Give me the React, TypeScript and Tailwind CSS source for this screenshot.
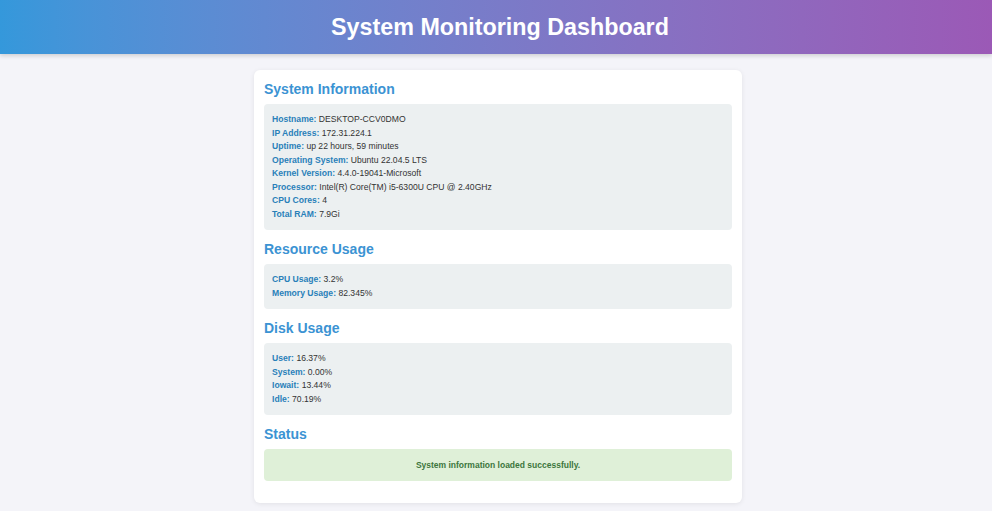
export default function App() {
  const sysInfo = [
    ["Hostname", "DESKTOP-CCV0DMO"],
    ["IP Address", "172.31.224.1"],
    ["Uptime", "up 22 hours, 59 minutes"],
    ["Operating System", "Ubuntu 22.04.5 LTS"],
    ["Kernel Version", "4.4.0-19041-Microsoft"],
    ["Processor", "Intel(R) Core(TM) i5-6300U CPU @ 2.40GHz"],
    ["CPU Cores", "4"],
    ["Total RAM", "7.9Gi"],
  ];
  const resources = [
    ["CPU Usage", "3.2%"],
    ["Memory Usage", "82.345%"],
  ];
  const disk = [
    ["User", "16.37%"],
    ["System", "0.00%"],
    ["Iowait", "13.44%"],
    ["Idle", "70.19%"],
  ];

  const Section = ({ title, rows }: { title: string; rows: string[][] }) => (
    <div className="mb-[9px]">
      <h2 className="text-[14px] leading-[20px] font-bold text-[#3b93d3] mb-[5px]">{title}</h2>
      <div className="bg-[#ecf0f1] rounded-[4px] px-[8px] py-[9px]">
        {rows.map(([k, v]) => (
          <div key={k} className="text-[8.6px] leading-[13.5px] text-[#333]">
            <span className="font-bold text-[#2980b9]">{k}:</span> {v}
          </div>
        ))}
      </div>
    </div>
  );

  return (
    <div className="min-h-screen bg-[#f4f4f9] font-['Liberation_Sans',Arial,sans-serif]">
      <header className="h-[54px] flex items-center justify-center pl-[8px] bg-gradient-to-r from-[#3498db] to-[#9b59b6] shadow-[0_2px_4px_rgba(0,0,0,0.15)]">
        <h1 className="text-white text-[23.3px] font-bold">System Monitoring Dashboard</h1>
      </header>
      <div className="pl-[4px] pt-[16px]">
        <main className="w-[488px] mx-auto bg-white rounded-[6px] shadow-[0_1px_5px_rgba(0,0,0,0.08)] px-[10px] pt-[9px] pb-[13px]">
          <Section title="System Information" rows={sysInfo} />
          <Section title="Resource Usage" rows={resources} />
          <Section title="Disk Usage" rows={disk} />
          <div className="mb-[9px]">
            <h2 className="text-[14px] leading-[20px] font-bold text-[#3b93d3] mb-[5px]">Status</h2>
            <div className="bg-[#dff0d8] rounded-[4px] h-[32px] flex items-center justify-center text-[8.5px] font-bold text-[#3c763d]">
              System information loaded successfully.
            </div>
          </div>
        </main>
      </div>
    </div>
  );
}
